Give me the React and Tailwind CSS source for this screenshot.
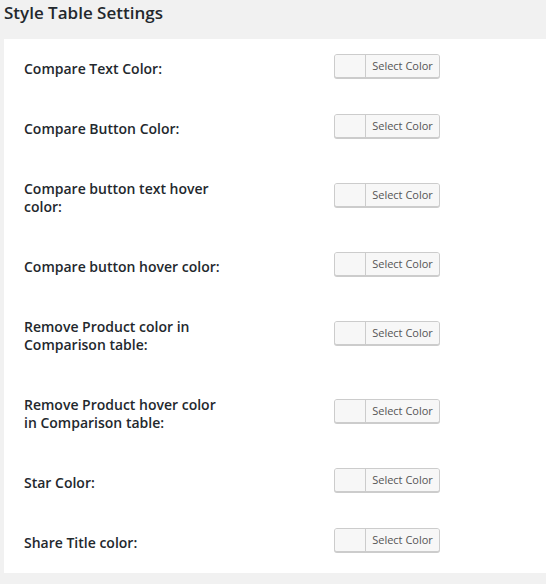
import React from 'react';

const rows = [
  { label: 'Compare Text Color:' },
  { label: 'Compare Button Color:' },
  { label: 'Compare button text hover color:' },
  { label: 'Compare button hover color:' },
  { label: 'Remove Product color in Comparison table:' },
  { label: 'Remove Product hover color in Comparison table:' },
  { label: 'Star Color:' },
  { label: 'Share Title color:' },
];

const ColorButton = () => (
  <button
    type="button"
    className="flex h-[24px] w-[106px] items-stretch overflow-hidden rounded-[3px] border border-[#cccccc] bg-[#f7f7f7] p-0 shadow-[0_1px_0_#cccccc]"
  >
    <span className="block w-[30px] shrink-0 bg-[#f7f7f7]" />
    <span className="flex flex-1 items-center justify-center border-l border-[#cccccc] bg-[#f7f7f7] px-[6px] text-[11px] leading-[22px] text-[#555555]">
      Select Color
    </span>
  </button>
);

const App = () => {
  return (
    <div className="min-h-[584px] bg-[#f1f1f1] pl-[4px] font-['Open_Sans',sans-serif]">
      <h3 className="m-0 h-[39px] pt-[2px] text-[17px] font-semibold leading-[22px] text-[#23282d]">
        Style Table Settings
      </h3>

      <div className="bg-white pl-[20px]">
        {rows.map((row) => (
          <div key={row.label} className="flex">
            <div className="w-[310px] shrink-0 py-[21px]">
              <div className="w-[200px] text-[14px] font-semibold leading-[18px] text-[#23282d]">
                {row.label}
              </div>
            </div>
            <div className="flex items-center pb-[6px]">
              <ColorButton />
            </div>
          </div>
        ))}
      </div>
    </div>
  );
};

export default App;
